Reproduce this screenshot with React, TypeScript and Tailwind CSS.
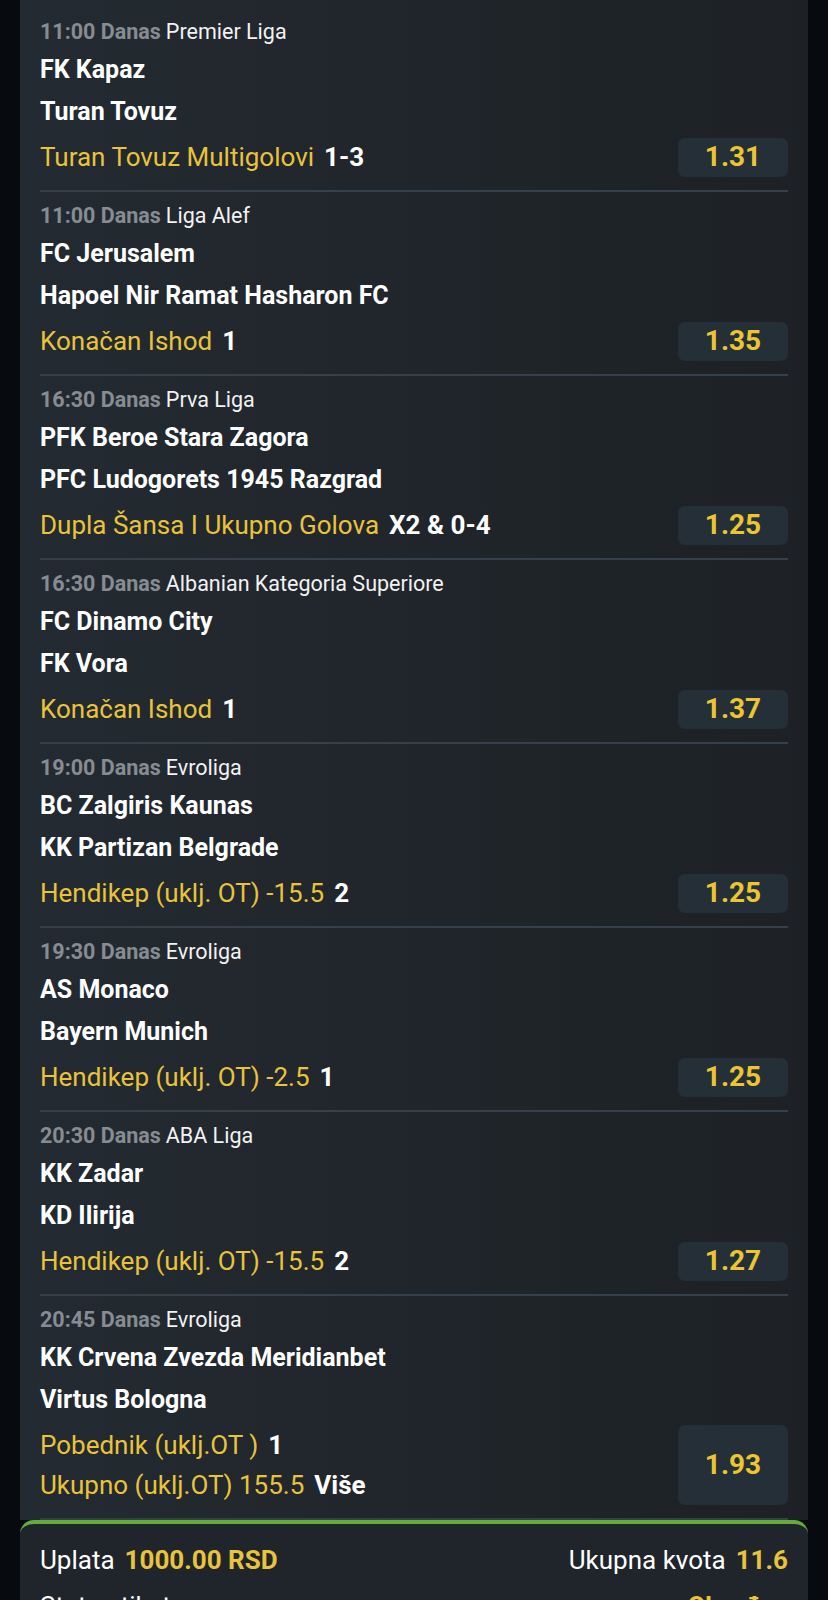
import React from "react";

type Bet = {
  time: string;
  league: string;
  home: string;
  away: string;
  markets: { name: string; pick: string }[];
  odd: string;
};

const bets: Bet[] = [
  { time: "11:00", league: "Premier Liga", home: "FK Kapaz", away: "Turan Tovuz", markets: [{ name: "Turan Tovuz Multigolovi", pick: "1-3" }], odd: "1.31" },
  { time: "11:00", league: "Liga Alef", home: "FC Jerusalem", away: "Hapoel Nir Ramat Hasharon FC", markets: [{ name: "Konačan Ishod", pick: "1" }], odd: "1.35" },
  { time: "16:30", league: "Prva Liga", home: "PFK Beroe Stara Zagora", away: "PFC Ludogorets 1945 Razgrad", markets: [{ name: "Dupla Šansa I Ukupno Golova", pick: "X2 & 0-4" }], odd: "1.25" },
  { time: "16:30", league: "Albanian Kategoria Superiore", home: "FC Dinamo City", away: "FK Vora", markets: [{ name: "Konačan Ishod", pick: "1" }], odd: "1.37" },
  { time: "19:00", league: "Evroliga", home: "BC Zalgiris Kaunas", away: "KK Partizan Belgrade", markets: [{ name: "Hendikep (uklj. OT) -15.5", pick: "2" }], odd: "1.25" },
  { time: "19:30", league: "Evroliga", home: "AS Monaco", away: "Bayern Munich", markets: [{ name: "Hendikep (uklj. OT) -2.5", pick: "1" }], odd: "1.25" },
  { time: "20:30", league: "ABA Liga", home: "KK Zadar", away: "KD Ilirija", markets: [{ name: "Hendikep (uklj. OT) -15.5", pick: "2" }], odd: "1.27" },
  {
    time: "20:45",
    league: "Evroliga",
    home: "KK Crvena Zvezda Meridianbet",
    away: "Virtus Bologna",
    markets: [
      { name: "Pobednik (uklj.OT )", pick: "1" },
      { name: "Ukupno (uklj.OT) 155.5", pick: "Više" },
    ],
    odd: "1.93",
  },
];

function Row({ b }: { b: Bet }) {
  const double = b.markets.length > 1;
  return (
    <div className="pt-[8px] pb-[13px] border-b-2 border-[#36404a]">
      <div className="h-[33px] flex items-center text-[21.5px] whitespace-nowrap">
        <span className="font-bold text-[#878c92]">{b.time} Danas</span>
        <span className="ml-[5px] text-[#f2f2f2]">{b.league}</span>
      </div>
      <div className="h-[42px] flex items-center text-[25px] font-bold text-white whitespace-nowrap">
        {b.home}
      </div>
      <div className="h-[42px] flex items-center text-[25px] font-bold text-white whitespace-nowrap">
        {b.away}
      </div>
      <div className="mt-[4px] flex items-center justify-between">
        <div className="flex flex-col">
          {b.markets.map((m, i) => (
            <div key={i} className="h-[40px] flex items-center text-[26px] whitespace-nowrap">
              <span className="text-[#e8c33b]">{m.name}</span>
              <span className="ml-[10px] font-bold text-white">{m.pick}</span>
            </div>
          ))}
        </div>
        <div
          className={
            (double ? "h-[80px] " : "h-[39px] ") +
            "w-[110px] rounded-[7px] bg-[#252f37] flex items-center justify-center text-[28px] font-bold text-[#ebc632]"
          }
        >
          {b.odd}
        </div>
      </div>
    </div>
  );
}

export default function App() {
  return (
    <div
      className="min-h-[1600px] bg-[#070b10] px-[20px]"
      style={{ fontFamily: "Roboto, 'Noto Sans', sans-serif" }}
    >
      <div className="bg-linear-to-r from-[#232a31] to-[#1d2125] pt-[8px] px-[20px]">
        {bets.map((b, i) => (
          <Row key={i} b={b} />
        ))}
      </div>
      <div className="bg-[#1f252a] rounded-t-[14px] border-t-4 border-[#65ad3b] px-[20px] pt-[16px] pb-[20px]">
        <div className="h-[40px] flex items-center justify-between text-[26px] whitespace-nowrap">
          <div>
            <span className="text-white">Uplata</span>
            <span className="ml-[10px] font-bold text-[#e8c33b]">1000.00 RSD</span>
          </div>
          <div>
            <span className="text-white">Ukupna kvota</span>
            <span className="ml-[10px] font-bold text-[#e8c33b]">11.6</span>
          </div>
        </div>
        <div className="mt-[6px] h-[40px] flex items-center justify-between text-[26px] whitespace-nowrap">
          <span className="text-white">Status tiketa</span>
          <span className="font-bold text-[#e8c33b]">Obrađen</span>
        </div>
      </div>
    </div>
  );
}
